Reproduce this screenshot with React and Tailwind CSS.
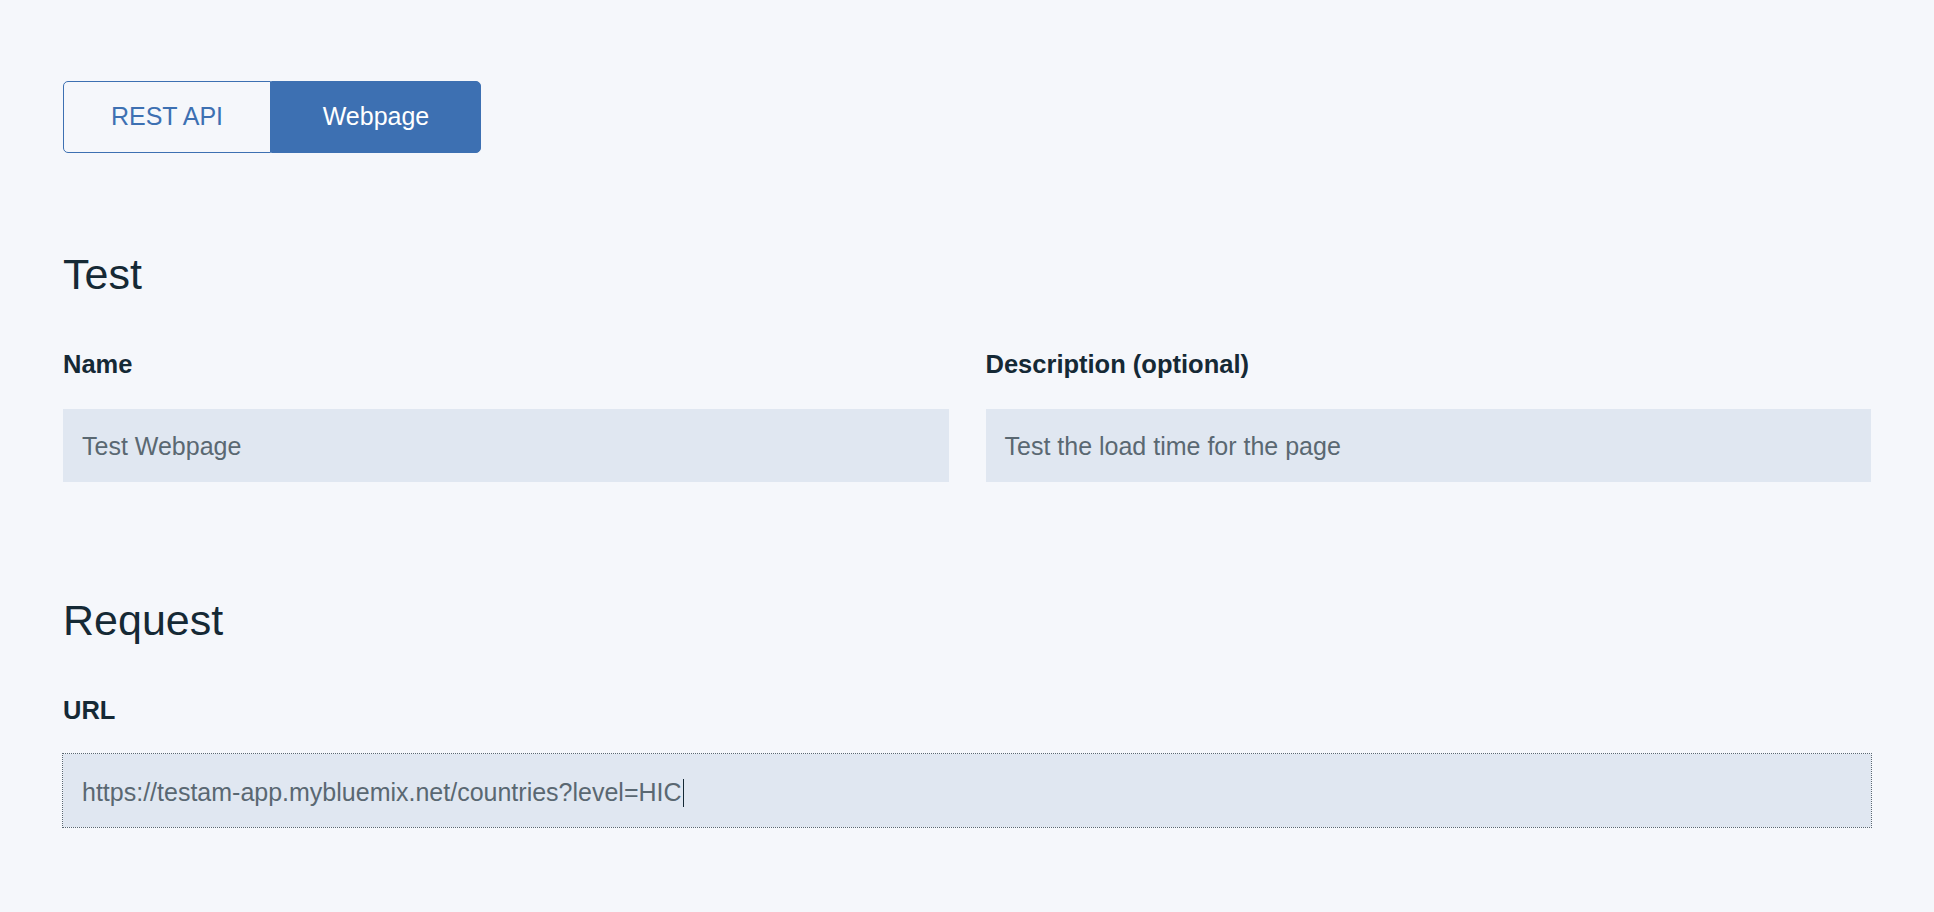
import React, { useState } from 'react';

const Field = ({ label, value, focused, caret }) => (
  <div className="flex flex-col">
    <label className="text-[25.5px] leading-[25.5px] font-bold text-[#152935]">{label}</label>
    <div
      className={`mt-[31px] h-[73px] flex items-center px-[19px] pt-[4px] bg-[#e0e7f1] text-[25px] text-[#5a6872] ${
        focused ? 'outline outline-1 outline-dotted outline-[#5a6872]' : ''
      }`}
    >
      <span>{value}</span>
      {caret && <span className="ml-[1px] w-px h-[28px] bg-[#152935]" />}
    </div>
  </div>
);

const App = () => {
  const [mode, setMode] = useState('webpage');

  return (
    <div
      className="min-h-screen bg-[#f5f7fb] px-[63px] pt-[81px] pb-[84px]"
      style={{ fontFamily: '"Liberation Sans", Arial, sans-serif' }}
    >
      {/* Type toggle */}
      <div className="flex w-[418px] h-[72px]">
        <button
          onClick={() => setMode('rest')}
          className={`w-[208px] rounded-l-[5px] border border-[#3d70b2] text-[25px] ${
            mode === 'rest' ? 'bg-[#3d70b2] text-white' : 'text-[#3d70b2]'
          }`}
        >
          REST API
        </button>
        <button
          onClick={() => setMode('webpage')}
          className={`w-[210px] rounded-r-[5px] border border-[#3d70b2] text-[25px] ${
            mode === 'webpage' ? 'bg-[#3d70b2] text-white' : 'text-[#3d70b2]'
          }`}
        >
          Webpage
        </button>
      </div>

      {/* Test section */}
      <h2 className="mt-[100px] text-[43px] leading-[43px] text-[#152935]">Test</h2>
      <div className="mt-[56px] grid grid-cols-2 gap-[37px]">
        <Field label="Name" value="Test Webpage" />
        <Field label="Description (optional)" value="Test the load time for the page" />
      </div>

      {/* Request section */}
      <h2 className="mt-[117px] text-[43px] leading-[43px] text-[#152935]">Request</h2>
      <div className="mt-[56px]">
        <Field
          label="URL"
          value="https://testam-app.mybluemix.net/countries?level=HIC"
          focused
          caret
        />
      </div>
    </div>
  );
};

export default App;
